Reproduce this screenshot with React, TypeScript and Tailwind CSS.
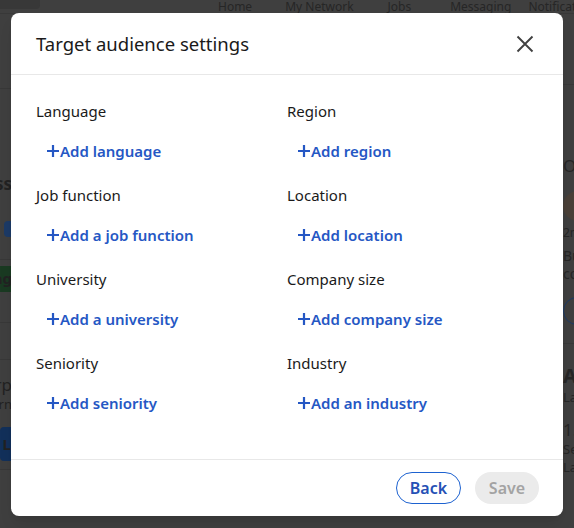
import React from 'react'

const fields = [
  { label: 'Language', action: 'Add language' },
  { label: 'Region', action: 'Add region' },
  { label: 'Job function', action: 'Add a job function' },
  { label: 'Location', action: 'Add location' },
  { label: 'University', action: 'Add a university' },
  { label: 'Company size', action: 'Add company size' },
  { label: 'Seniority', action: 'Add seniority' },
  { label: 'Industry', action: 'Add an industry' },
]

function PlusIcon() {
  return (
    <svg width="14" height="14" viewBox="0 0 14 14" className="shrink-0">
      <path d="M7 1v12M1 7h12" stroke="currentColor" strokeWidth="2.2" />
    </svg>
  )
}

function CloseIcon() {
  return (
    <svg width="18" height="18" viewBox="0 0 18 18">
      <path d="M1.5 1.5l15 15M16.5 1.5l-15 15" stroke="#404040" strokeWidth="1.9" />
    </svg>
  )
}

function Background() {
  return (
    <div className="flex h-full flex-col bg-[#3f3f3f] text-[#222]">
      <div className="flex h-[14px] items-end overflow-hidden border-b border-[#383838]">
        <div className="ml-[-4px] mb-[4px] h-[10px] w-[44px] shrink-0 rounded-b bg-[#383838]" />
        <div className="ml-[178px] flex shrink-0 text-[12px] leading-[12px] text-[#262626]">
          <span className="mt-[-4px] whitespace-nowrap">Home</span>
          <span className="ml-[33px] mt-[-4px] whitespace-nowrap">My Network</span>
          <span className="ml-[34px] mt-[-4px] whitespace-nowrap">Jobs</span>
          <span className="ml-[39px] mt-[-4px] whitespace-nowrap">Messaging</span>
          <span className="ml-[17px] mt-[-4px] whitespace-nowrap">Notifications</span>
        </div>
      </div>
      <div className="flex flex-1">
        <div className="flex w-[12px] flex-col items-end overflow-hidden">
          <div className="mt-[74px] h-px w-full bg-[#383838]" />
          <div className="mt-[82px] whitespace-nowrap text-[17px] font-bold">Business</div>
          <div className="mt-[24px] h-[16px] w-[8px] rounded-l bg-[#1c3a66]" />
          <div className="mt-[22px] h-px w-full bg-[#383838]" />
          <div className="mt-[6px] flex h-[26px] items-center whitespace-nowrap bg-[#1a3a22] text-[15px] font-bold">ng</div>
          <div className="mt-[30px] h-px w-full bg-[#383838]" />
          <div className="mt-[36px] h-px w-full bg-[#383838]" />
          <div className="mt-[12px] whitespace-nowrap text-[17px]">Sharp</div>
          <div className="whitespace-nowrap text-[13px] leading-[14px]">Learn</div>
          <div className="mt-[16px] flex h-[34px] w-[12px] items-center justify-end rounded-l bg-[#12305a] pr-[1px] text-[15px] font-bold">L</div>
          <div className="mt-[8px] h-px w-full bg-[#383838]" />
        </div>
        <div className="flex-1" />
        <div className="flex w-[11px] flex-col overflow-hidden text-[#262626]">
          <div className="mt-[70px] h-px w-full bg-[#383838]" />
          <div className="mt-[70px] whitespace-nowrap text-[17px] leading-[22px]">Others</div>
          <div className="mt-[14px] h-[30px] w-[30px] rounded-full bg-[#4a4038]" />
          <div className="mt-[4px] whitespace-nowrap text-[12px] leading-[16px]">2nd</div>
          <div className="mt-[6px] whitespace-nowrap text-[14px] leading-[18px]">Build</div>
          <div className="whitespace-nowrap text-[14px] leading-[18px]">co</div>
          <div className="mt-[14px] h-[28px] w-[28px] rounded-full border border-[#1c3a66]" />
          <div className="mt-[18px] h-px w-full bg-[#383838]" />
          <div className="mt-[20px] whitespace-nowrap text-[20px] font-bold leading-[24px]">About</div>
          <div className="whitespace-nowrap text-[13px] leading-[18px]">Last</div>
          <div className="mt-[14px] whitespace-nowrap text-[17px] leading-[20px]">1.</div>
          <div className="whitespace-nowrap text-[13px] leading-[18px]">Senior</div>
          <div className="whitespace-nowrap text-[13px] leading-[18px]">Last</div>
        </div>
      </div>
    </div>
  )
}

export default function App() {
  return (
    <div
      className="relative h-[528px] w-[574px] overflow-hidden"
      style={{ fontFamily: '"Noto Sans", "Open Sans", sans-serif' }}
    >
      <Background />

      <div className="absolute inset-0 pl-[11px] pt-[13px]">
        <div className="flex h-[503px] w-[552px] flex-col rounded-lg bg-white shadow-lg">
          <div className="flex h-[62px] items-center justify-between border-b border-[#e8e8e8] pl-[25px] pr-[22px]">
            <h2 className="text-[18.5px] text-[#1a1a1a]">Target audience settings</h2>
            <button className="flex h-[32px] w-[32px] items-center justify-center">
              <CloseIcon />
            </button>
          </div>

          <div className="grid flex-1 grid-cols-2 content-start px-[25px] pt-[24px]">
            {fields.map((field) => (
              <div key={field.label} className="pb-5">
                <p className="h-6 text-[15px] leading-6 text-[#1a1a1a]">{field.label}</p>
                <button className="mt-4 flex h-6 items-center pl-[10px] text-[15px] font-semibold leading-6 text-[#2557c4]">
                  <PlusIcon />
                  <span className="whitespace-nowrap">{field.action}</span>
                </button>
              </div>
            ))}
          </div>

          <div className="flex h-[57px] items-center justify-end gap-[14px] border-t border-[#e8e8e8] pr-[24px]">
            <button className="h-[32px] w-[65px] rounded-full border border-[#1d62d0] text-[16px] font-semibold text-[#2550b5]">
              Back
            </button>
            <button className="h-[32px] w-[64px] rounded-full bg-[#ebebeb] text-[16px] font-semibold text-[#a3a3a3]">
              Save
            </button>
          </div>
        </div>
      </div>
    </div>
  )
}
